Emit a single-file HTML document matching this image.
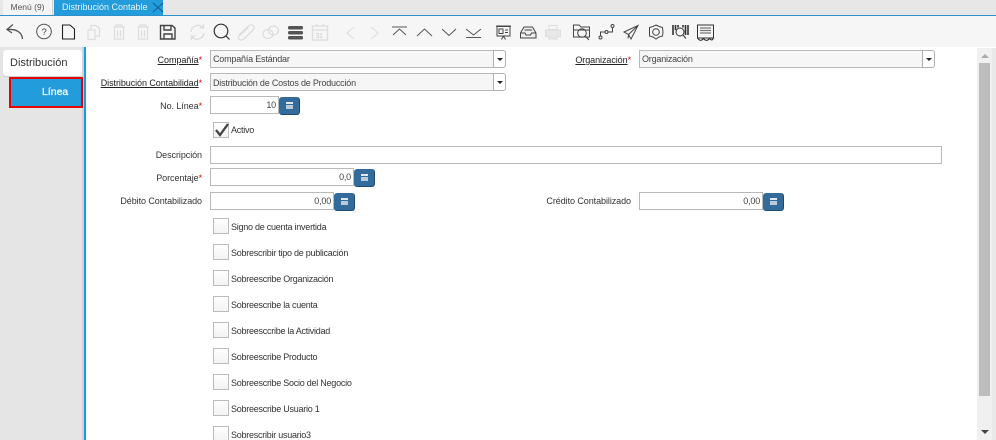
<!DOCTYPE html>
<html lang="es"><head><meta charset="utf-8"><title>Distribución Contable</title>
<style>
html,body{margin:0;padding:0;width:996px;height:440px;overflow:hidden;background:#fff}
body{position:relative;font-family:"Liberation Sans",sans-serif;font-size:9px;letter-spacing:-.25px;color:#333}
.a,.l,.i,.b,.c,.t,.d{position:absolute;box-sizing:border-box}
.l{right:calc(996px - 202px);text-align:right;white-space:nowrap;height:12px;line-height:12px;color:#333;letter-spacing:-.07px}
.l u{text-decoration:underline;color:#222}.l s{text-decoration:none;color:#e00000;font-size:9px}
.i{border:1px solid #b9b9b9;height:18px;line-height:17px;padding:0 2px;background:#fff;white-space:nowrap;color:#444;letter-spacing:-.2px}
.g{background:#f6f6f6;padding-left:2px}
.r{text-align:right}
.d{width:13px;height:18px;border:1px solid #b0b0b0;border-radius:0 3px 3px 0;background:#fff}
.d:after{content:"";position:absolute;left:3px;top:7px;border:3px solid transparent;border-top:3px solid #222;border-bottom:0}
.b{width:21px;height:18px;background:#336b9b;border-radius:3px;border-right:1px solid #1d4a70;border-bottom:1px solid #1d4a70}
.b:after{content:"";position:absolute;left:7px;top:5px;width:7px;height:7px;background:#b9cbdb;box-shadow:inset 0 2px 0 #dfe8ef,inset 0 3px 0 #336b9b}
.c{left:213px;width:16px;height:16px;border:1px solid #bcbcbc;background:linear-gradient(#fff,#f3f3f3)}
.t{left:231px;height:12px;line-height:12px;white-space:nowrap;color:#333}
svg{position:absolute;left:0;top:0;overflow:visible}
</style></head><body>
<div class="a" style="left:0;top:0;width:996px;height:15px;background:#e7e7e7"></div>
<div class="a" style="left:3px;top:0;width:50px;height:15px;background:#f4f4f4;border-right:1px solid #d5d5d5;text-align:center;line-height:14px;font-size:8.5px;letter-spacing:0;color:#555">Menú (9)</div>
<div class="a" style="left:54px;top:0;width:109px;height:15px;background:#229cda;color:#e8f5fc;line-height:14px;padding-left:8px;font-size:9px;letter-spacing:0;white-space:nowrap">Distribución Contable</div>
<div class="a" style="left:0;top:15px;width:996px;height:1px;background:#2f8fc9"></div>
<div class="a" style="left:0;top:16px;width:996px;height:31px;background:#f6f6f6"></div>

<svg width="996" height="48" fill="none" stroke="#555" stroke-width="1">
<path d="M153 3L163 12M153 12L163 3" stroke="#145c8c"/>
<path d="M13 24.500L7 29.500L12 33M8 29.500C16 29 22 32 22.500 39" stroke-width="1.300"/>
<circle cx="44" cy="31.500" r="7.300"/><text x="41.500" y="35" font-size="9.500" fill="#444" stroke="none" font-family="Liberation Sans">?</text>
<path d="M62.500 25H70L74.500 29V39H62.500Z" stroke="#222" stroke-width="1.100"/>
<g stroke="#ddd" stroke-width="1.200"><path d="M88 30H95V39.500H88ZM91 30V25.500H96L99.500 28.500V36H95"/>
<path d="M113 27H125M116 27V25H122V27M114.500 28V39H123.500V28M117.500 30V37M120.500 30V37"/>
<path d="M137 27H149M140 27V25H146V27M138.500 28V39H147.500V28M141.500 30V37M144.500 30V37"/></g>
<path d="M160.500 25.500H172L175 28V39H160.500ZM164 25.500V30H171V25.500M164 39V34H172V39" stroke="#444" stroke-width="1.400"/>
<g stroke="#ddd" stroke-width="1.300"><path d="M191 32A7 7 0 0 1 203 27.500M204 33A7 7 0 0 1 192 37M203.500 24V28H199.500M191.500 40V36H195.500"/>
<path d="M239 35L249 25.500C252 23 256 27 253 30L244 39C240 42 236 38 240 35L248.500 27.500"/>
<ellipse cx="268" cy="34" rx="5" ry="4.500"/><ellipse cx="273.500" cy="30.500" rx="5" ry="4.500"/>
<path d="M312.500 26H327.500V40H312.500ZM312.500 30H327.500M317 24V27M323 24V27"/><text x="315.500" y="38" font-size="7" fill="#ccc" stroke="none" font-family="Liberation Sans">31</text></g>
<circle cx="221" cy="31" r="6.800" stroke="#333" stroke-width="1.200"/><path d="M226 36L229.500 39.500" stroke="#333" stroke-width="1.200"/>
<g fill="#555" stroke="none"><rect x="288" y="26" width="15" height="3.500" rx="1.500"/><rect x="288" y="31" width="15" height="3.500" rx="1.500"/><rect x="288" y="36" width="15" height="3.500" rx="1.500"/></g>
<path d="M354 27L347 33L354 39M371 27L378 33L371 39" stroke="#ddd"/>
<path d="M392 27H407M393 35L399.500 29L406 35M417 36L424.500 29L432 36M442 29L449 35.500L456 29M466 29L473.500 35L481 29M466 37.500H481" stroke="#555"/>
<g stroke="#444"><path d="M497 26.500H510V36H497ZM496 26H511M499 29H503V33.500H499ZM505 30H508M505 32.500H508M503.500 36L501.500 39.500M503.500 36L505.500 39.500"/>
<path d="M520.500 33L524 27H532.500L536 33V38H520.500ZM520.500 33H525L526 35H530.500L531.500 33H536M524.500 30H532" fill="#eee"/></g>
<g stroke="#ddd"><rect x="549" y="25.500" width="8" height="4"/><path d="M545.500 30H560.500V36.500H557V39H549V36.500H545.500Z" fill="#e8e8e8"/></g>
<g stroke="#444"><path d="M573.500 25H579L581 27H589.500V37H573.500ZM573.500 30H589.500"/><circle cx="582" cy="33" r="4.300"/><path d="M585.500 36.500L589 40"/>
<circle cx="600.500" cy="37.500" r="1.500"/><circle cx="606.500" cy="32" r="1.500"/><circle cx="612.500" cy="26" r="1.500"/><path d="M600.500 36V32H605M608 32H612.500V27.500"/>
<path d="M624 32L638 25.500L631 39L628.500 34.500ZM628.500 34.500L638 25.500M628.500 34.500L628 38.500"/>
<path d="M656 25L659 26.500L662.500 27.500L663 32L662.500 36L659 37L656 39L653 37L649.500 36L649.500 32L649.500 27.500L653 26.500Z"/><circle cx="656" cy="32" r="3.300"/></g>
<g stroke="#333"><path d="M673 25V35M675.500 25V30M678 25V27.500M683 25V27.500M685.500 25V35M688 25V35" stroke-width="1.600"/><circle cx="680" cy="32" r="4"/><path d="M683 35L686 38.500"/>
<rect x="697.500" y="25" width="16" height="13"/><path d="M700 28H711M700 30.500H711M700 33H711" stroke="#777" stroke-width="1.300"/><path d="M697.500 38C699.500 41 701.500 41 703.500 38.500C705.500 41 707.500 41 709.500 38.500C711.500 41 712.500 40 713.500 38" stroke-width="1.100"/></g>
</svg>

<div class="a" style="left:0;top:47px;width:84px;height:393px;background:#e5e5e5;border-right:2px solid #d2d2d2"></div>
<div class="a" style="left:84px;top:47px;width:2px;height:393px;background:#159ddf"></div>
<div class="a" style="left:3px;top:50px;width:79px;height:26px;background:#fff;border-radius:3px;font-size:11px;letter-spacing:0;line-height:26px;padding-left:7px;color:#333;box-shadow:0 1px 1px #ccc">Distribución</div>
<div class="a" style="left:9px;top:77px;width:74px;height:31px;background:#229cda;border:2px solid #e90000;color:#f4fbfe;font-size:10.5px;letter-spacing:0;-webkit-text-stroke:.3px #f4fbfe;line-height:26px;padding-left:31px">Línea</div>

<div class="l" style="top:54px"><u>Compañía</u><s>*</s></div>
<div class="i g" style="left:210px;top:50px;width:284px">Compañía Estándar</div><div class="d" style="left:493px;top:50px"></div>
<div class="l" style="top:77px"><u>Distribución Contabilidad</u><s>*</s></div>
<div class="i g" style="left:210px;top:73px;width:284px;line-height:18px">Distribución de Costos de Producción</div><div class="d" style="left:493px;top:73px"></div>
<div class="l" style="top:100px">No. Línea<s>*</s></div>
<div class="i r" style="left:210px;top:96px;width:69px">10</div><div class="b" style="left:279px;top:97px"></div>

<div class="c" style="top:122px"></div>
<svg width="996" height="140"><path d="M216 130L220 135L228 124" stroke="#444" stroke-width="2.300" fill="none"/></svg>
<div class="t" style="top:124px">Activo</div>

<div class="l" style="top:149px">Descripción</div>
<div class="i" style="left:210px;top:146px;width:732px"></div>
<div class="l" style="top:172px">Porcentaje<s>*</s></div>
<div class="i r" style="left:210px;top:168px;width:144px">0,0</div><div class="b" style="left:354px;top:169px"></div>
<div class="l" style="top:195px">Débito Contabilizado</div>
<div class="i r" style="left:210px;top:192px;width:124px">0,00</div><div class="b" style="left:334px;top:193px"></div>

<div class="l" style="top:54px;right:auto;left:540px;width:91px"><u>Organización</u><s>*</s></div>
<div class="i g" style="left:639px;top:50px;width:284px">Organización</div><div class="d" style="left:922px;top:50px"></div>
<div class="l" style="top:195px;right:auto;left:520px;width:111px">Crédito Contabilizado</div>
<div class="i r" style="left:639px;top:192px;width:124px">0,00</div><div class="b" style="left:763px;top:193px"></div>

<div class="c" style="top:218px"></div><div class="t" style="top:221px">Signo de cuenta invertida</div>
<div class="c" style="top:244px"></div><div class="t" style="top:247px">Sobrescribir tipo de publicación</div>
<div class="c" style="top:270px"></div><div class="t" style="top:273px">Sobreescribe Organización</div>
<div class="c" style="top:296px"></div><div class="t" style="top:299px">Sobreescribe la cuenta</div>
<div class="c" style="top:322px"></div><div class="t" style="top:325px">Sobreesccribe la Actividad</div>
<div class="c" style="top:348px"></div><div class="t" style="top:351px">Sobreescribe Producto</div>
<div class="c" style="top:374px"></div><div class="t" style="top:377px">Sobreescribe Socio del Negocio</div>
<div class="c" style="top:400px"></div><div class="t" style="top:403px">Sobreescribe Usuario 1</div>
<div class="c" style="top:426px"></div><div class="t" style="top:429px">Sobrescribir usuario3</div>

<div class="a" style="left:977px;top:48px;width:15px;height:392px;background:#f0f0f0"></div>
<div class="a" style="left:992px;top:48px;width:4px;height:392px;background:#e9e9e9"></div>
<div class="a" style="left:979px;top:63px;width:11px;height:333px;background:#bdbdbd"></div>
<div class="a" style="left:981px;top:54px;border:4px solid transparent;border-bottom:4px solid #aaa;border-top:0"></div>
<div class="a" style="left:981px;top:430px;border:4px solid transparent;border-top:4px solid #444;border-bottom:0"></div>
</body></html>
